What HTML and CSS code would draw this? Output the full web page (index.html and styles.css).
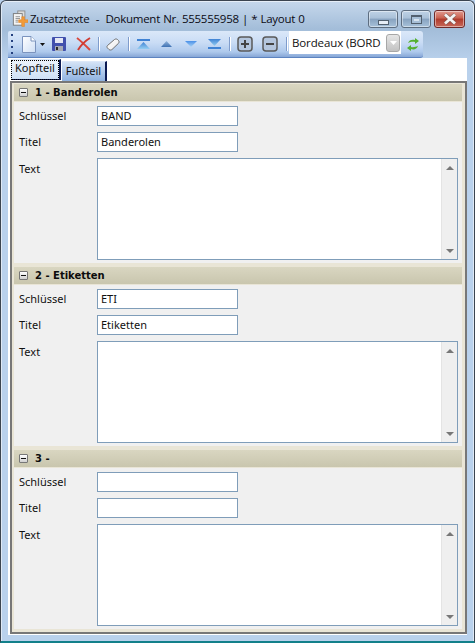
FILE: index.html
```html
<!DOCTYPE html>
<html lang="de">
<head>
<meta charset="utf-8">
<title>Zusatztexte</title>
<link rel="stylesheet" href="styles.css">
</head>
<body>
<div class="window">
  <header class="titlebar">
    <svg class="app-icon" width="16" height="17" viewBox="0 0 18 18">
      <rect x="6.500" y=".5" width="8" height="10" fill="#dcdcdc" stroke="#8a8a8a"/>
      <rect x="1.500" y="3.500" width="10" height="13" fill="#f4f4f4" stroke="#777"/>
      <path d="M4 7h5M4 9h5M4 11h3M4 13h3" stroke="#8b8b8b"/>
      <path d="M11 7h3v3.500h4v3h-4V18h-3v-4.500H7.500v-3H11z" fill="#f29b38" stroke="#e08428" stroke-width=".6"/>
    </svg>
    <span class="title-text">Zusatztexte  -  Dokument Nr. 555555958 | * Layout 0</span>
    <div class="caption-buttons">
      <div class="cap cap-min"><i class="min-glyph"></i></div>
      <div class="cap cap-max"><i class="max-glyph"></i></div>
      <div class="cap cap-close">
        <svg width="16" height="12" viewBox="0 0 16 12"><path d="M3 1.500 13 10.500M13 1.500 3 10.500" stroke="#5a5a5a" stroke-width="4.200" opacity=".55"/><path d="M3 1.500 13 10.500M13 1.500 3 10.500" stroke="#f4f4f4" stroke-width="2.800"/></svg>
      </div>
    </div>
  </header>

  <div class="client">
    <div class="toolbar">
      <svg class="grip" width="3" height="20" viewBox="0 0 3 20"><path d="M0 0h2v2H0zM0 6h2v2H0zM0 12h2v2H0zM0 18h2v2H0z" fill="#24407f"/></svg>
      <svg class="ic ic-new" width="14" height="17" viewBox="0 0 14 17">
        <defs><linearGradient id="paper" x1="0" y1="0" x2="1" y2="1"><stop offset="0" stop-color="#fff"/><stop offset="1" stop-color="#cfdff5"/></linearGradient></defs>
        <path d="M.5.500h8.500l4.500 4.500v11.500H.5z" fill="url(#paper)" stroke="#7b93bd"/><path d="M9 .5v4.500h4.500" fill="#fff" stroke="#7b93bd"/>
      </svg>
      <svg class="ic ic-drop" width="5" height="3" viewBox="0 0 5 3"><path d="M0 0h5L2.500 3z" fill="#111"/></svg>
      <svg class="ic ic-save" width="14" height="14" viewBox="0 0 14 14"><rect width="14" height="14" rx="1" fill="#4150ad"/><rect x="3" y="1" width="8" height="5" fill="#e4e7f4"/><rect x="3" y="9" width="8" height="5" fill="#a7abb5"/><rect x="4" y="10" width="2" height="3" fill="#2a2a2a"/></svg>
      <svg class="ic ic-del" width="15" height="14" viewBox="0 0 15 14"><path d="M1 1c4 3 8 7 13 12" stroke="#d9483c" stroke-width="2" fill="none"/><path d="M14 1C9 4 5 8 2 13" stroke="#d03c32" stroke-width="2" fill="none"/></svg>
      <i class="sep"></i>
      <svg class="ic ic-erase" width="14" height="13" viewBox="0 0 14 13">
        <defs><linearGradient id="pill" x1="0" y1="0" x2="1" y2="1"><stop offset="0" stop-color="#fff"/><stop offset=".7" stop-color="#f0f0f0"/><stop offset="1" stop-color="#a8a8a8"/></linearGradient></defs>
        <path d="M1.500 7.500 8.500 1.500c1-.7 2-.7 3 0l1 1c.8 1 .7 2 0 2.800L6 11.500c-1 .7-2 .7-3 0L1.500 10c-.7-.8-.7-1.700 0-2.500z" fill="url(#pill)" stroke="#6f6f6f"/>
      </svg>
      <i class="sep"></i>
      <svg class="ic ic-first" width="13" height="10" viewBox="0 0 13 10">
        <defs><linearGradient id="blue" x1="0" y1="0" x2="0" y2="1"><stop offset="0" stop-color="#3f82d4"/><stop offset="1" stop-color="#93cdf2"/></linearGradient>
        <linearGradient id="blueup" x1="0" y1="0" x2="0" y2="1"><stop offset="0" stop-color="#8fb2d8"/><stop offset="1" stop-color="#3f72b4"/></linearGradient>
        <linearGradient id="bluedn" x1="0" y1="0" x2="0" y2="1"><stop offset="0" stop-color="#4a90e8"/><stop offset="1" stop-color="#a8d2f4"/></linearGradient></defs>
        <path d="M0 0h13v2H0z" fill="#3f82d4"/><path d="M6.500 3 13 10H0z" fill="url(#blue)"/>
      </svg>
      <svg class="ic ic-up" width="11" height="6" viewBox="0 0 11 6"><path d="M5.500 0 11 6H0z" fill="url(#blueup)"/></svg>
      <svg class="ic ic-down" width="12" height="6" viewBox="0 0 12 6"><path d="M0 0h12L6 6z" fill="url(#bluedn)"/></svg>
      <svg class="ic ic-last" width="13" height="10" viewBox="0 0 13 10"><path d="M0 0h13L6.500 7z" fill="url(#blue)"/><path d="M0 8h13v2H0z" fill="#3f82d4"/></svg>
      <i class="sep"></i>
      <svg class="ic ic-plus" width="16" height="16" viewBox="0 0 16 16"><rect x="1" y="1" width="14" height="14" rx="3" fill="#b4c6de" stroke="#5a5a5a" stroke-width="1.500"/><path d="M4 8h8M8 4v8" stroke="#444" stroke-width="2"/></svg>
      <svg class="ic ic-minus" width="16" height="16" viewBox="0 0 16 16"><rect x="1" y="1" width="14" height="14" rx="3" fill="#b4c6de" stroke="#5a5a5a" stroke-width="1.500"/><path d="M4 8h8" stroke="#444" stroke-width="2"/></svg>
      <i class="sep"></i>
      <div class="combo">
        <span class="combo-text">Bordeaux (BORD</span>
        <div class="combo-btn"><svg width="7" height="4" viewBox="0 0 7 4"><path d="M0 0h7L3.500 4z" fill="#fff"/></svg></div>
      </div>
      <svg class="ic ic-refresh" width="12" height="15" viewBox="0 0 12 15"><path d="M1 6c1-3 4-4 7-3V1l4 3-4 3V5C6 4.500 3 5 1 6z" fill="#55b030"/><path d="M11 9c-1 3-4 4-7 3v2L0 11l4-3v2c2 .5 5 0 7-1z" fill="#55b030"/></svg>
    </div>

    <div class="tabstrip">
      <div class="tab tab-active"><span class="tab-label">Kopfteil</span></div>
      <div class="tab"><span class="tab-label">Fußteil</span></div>
    </div>

    <div class="panel">
      <section class="group">
        <h2 class="group-head"><span class="toggle"><i></i></span>1 - Banderolen</h2>
        <div class="fields">
          <label class="lbl">Schlüssel</label><input class="inp" value="BAND">
          <label class="lbl">Titel</label><input class="inp" value="Banderolen">
          <label class="lbl lbl-text">Text</label>
          <div class="memo"><div class="scroll"><i class="arrow-up"></i><i class="arrow-down"></i></div></div>
        </div>
      </section>
      <section class="group">
        <h2 class="group-head"><span class="toggle"><i></i></span>2 - Etiketten</h2>
        <div class="fields">
          <label class="lbl">Schlüssel</label><input class="inp" value="ETI">
          <label class="lbl">Titel</label><input class="inp" value="Etiketten">
          <label class="lbl lbl-text">Text</label>
          <div class="memo"><div class="scroll"><i class="arrow-up"></i><i class="arrow-down"></i></div></div>
        </div>
      </section>
      <section class="group">
        <h2 class="group-head"><span class="toggle"><i></i></span>3 -</h2>
        <div class="fields">
          <label class="lbl">Schlüssel</label><input class="inp" value="">
          <label class="lbl">Titel</label><input class="inp" value="">
          <label class="lbl lbl-text">Text</label>
          <div class="memo"><div class="scroll"><i class="arrow-up"></i><i class="arrow-down"></i></div></div>
        </div>
      </section>
    </div>
  </div>
</div>
</body>
</html>
```
FILE: styles.css
```css
* { box-sizing: border-box; }
html, body { margin: 0; padding: 0; }
body { width: 475px; height: 643px; overflow: hidden; background: #b9d1ec; font-family: "DejaVu Sans", sans-serif; }

.window {
  width: 475px; height: 643px;
  display: flex; flex-direction: column;
  border: 1px solid #3b4450;
  border-bottom: 2px solid #12808a;
  border-radius: 6px 6px 0 0;
  background: linear-gradient(180deg, #c6d8ec 0, #a3bdd9 28px, #b9d1ec 60px, #b9d1ec 100%);
  box-shadow: inset 0 1px 0 #e6eef7, inset 1px 0 0 #dfe9f5, inset -1px 0 0 #dfe9f5;
  padding: 0 7px 6px;
}

.titlebar { height: 30px; flex: none; display: flex; align-items: flex-start; }
.app-icon { margin: 9px 0 0 4px; flex: none; }
.title-text {
  margin: 9px 0 0 2px; font: 11.500px/17px "Open Sans", "Noto Sans", sans-serif;
  color: #0b0b14; white-space: pre; letter-spacing: -.25px; word-spacing: .4px;
}
.caption-buttons { margin: 9px 2px 0 auto; display: flex; gap: 3px; }
.cap {
  height: 18px; border: 1px solid #5d6d80; border-radius: 3px;
  display: flex; align-items: center; justify-content: center;
  box-shadow: inset 0 0 0 1px rgba(255,255,255,.45);
  background: linear-gradient(180deg, #bfd2e6 0, #a9c0d8 45%, #87a2bf 50%, #a7c1da 100%);
}
.cap-min, .cap-max { width: 30px; }
.cap-close { width: 31px; border-color: #6e2a2a; background: linear-gradient(180deg, #e29a90 0, #c9604f 45%, #b03a2c 50%, #c7685a 100%); }
.min-glyph { width: 11px; height: 5px; margin-top: 6px; background: #e6edf6; border: 1px solid #52606f; }
.max-glyph { width: 11px; height: 9px; background: #d8e4f0; border: 1px solid #52606f; border-top-width: 2px; box-shadow: inset 0 0 0 2px #a7bfd7; }

.client { flex: 1; min-height: 0; display: flex; flex-direction: column; background: linear-gradient(180deg, transparent 27px, #fff 27px); }

.toolbar {
  height: 27px; width: 415px; flex: none;
  display: flex; align-items: center;
  background: linear-gradient(180deg, #dbe8f9 0, #c9dcf5 45%, #aec9ec 80%, #86a6d6 100%);
  border-bottom: 1px solid #5c83c0;
  border-radius: 2px 3px 3px 0;
}
.grip { margin-left: 3px; flex: none; }
.ic { flex: none; display: block; }
.ic-new { margin-left: 8px; }
.ic-drop { margin-left: 4px; }
.ic-save { margin-left: 7px; }
.ic-del { margin-left: 10px; }
.ic-erase { margin-left: 7px; }
.ic-first { margin-left: 8px; }
.ic-up { margin-left: 11px; }
.ic-down { margin-left: 13px; }
.ic-last { margin-left: 11px; }
.ic-plus { margin-left: 7px; }
.ic-minus { margin-left: 9px; }
.ic-refresh { margin-left: 6px; }
.sep { width: 1px; height: 14px; background: #7f9ccc; box-shadow: 1px 0 0 #fff; flex: none; margin-left: 7px; }
.ic-erase + .sep, .ic-last + .sep, .ic-minus + .sep { margin-left: 8px; }
.combo { width: 112px; height: 23px; margin-left: 2px; margin-top: -3px; background: #fff; display: flex; align-items: center; flex: none; }
.combo-text { font: 11.500px/16px "Open Sans", "Noto Sans", sans-serif; color: #111; margin-left: 3px; flex: 1; white-space: nowrap; letter-spacing: -.12px; }
.combo-btn {
  width: 14px; height: 18px; margin-right: 1px; border: 1px solid #a7a7a7; border-radius: 3px; flex: none;
  background: linear-gradient(180deg, #e6e6e6, #c2c2c2);
  display: flex; align-items: center; justify-content: center;
}

.tabstrip { height: 23px; flex: none; display: flex; align-items: flex-start; padding: 1px 0 0 3px; background: #fff; gap: 1px; }
.tab {
  height: 20px; width: 45px; margin-top: 2px; padding-bottom: 2px; display: flex; align-items: center; justify-content: center;
  background: linear-gradient(180deg, #d4e3f6, #8fb2e0);
  border-right: 2px solid #0b1a52;
  border-top: 1px solid #dce8f8;
  font: 11px/16px "Noto Sans", sans-serif; color: #111;
}
.tab-active { width: 50px; height: 21px; margin-top: 0; padding-bottom: 0; background: linear-gradient(180deg, #edf3fb, #cfe0f5); border-bottom: 1px solid #0b1a52; }
.tab-active .tab-label { outline: 1px dotted #000; padding: 0 3px 2px; width: 46px; height: 18px; line-height: 14px; text-align: center; }

.panel {
  flex: 1; min-height: 0; overflow: hidden;
  background: #e9e5d6;
  border: 2px solid #777;
  margin: 0 0 1px 2px;
  padding: 1px 3px 0 2px;
}
.group { margin-bottom: 4px; }
.group-head {
  margin: 0; height: 18px; display: flex; align-items: center;
  font: bold 10px/17px "DejaVu Sans", sans-serif; color: #0c0c0c;
  background: linear-gradient(180deg, #d9d6c1, #c9c6ae) 0 0 / 100% 17px no-repeat, #e9e5d6;
  padding: 0 0 1px 5px;
}
.toggle { width: 9px; height: 9px; border: 1px solid #777; border-radius: 1px; background: linear-gradient(180deg,#fff,#d0d0d0); margin-right: 7px; display: flex; align-items: center; justify-content: center; flex: none; }
.toggle i { width: 5px; height: 1px; background: #111; }

.fields {
  display: grid; grid-template-columns: 83px 141px 1fr;
  grid-template-rows: 20px 20px 102px; row-gap: 6px;
  padding: 4px 4px 3px 0;
  background: #f0f0f0;
}
.lbl { grid-column: 1; font: 11px/20px "Noto Sans", sans-serif; color: #111; padding-left: 5px; }
.lbl-text { padding-top: 1px; }
.inp {
  grid-column: 2; width: 141px; height: 20px; border: 1px solid #7f9db9; background: #fff; padding: 0 3px 1px;
  font: 11px/17px "Noto Sans", sans-serif; color: #111; outline: 0;
}
.memo { grid-column: 2 / 4; border: 1px solid #7f9db9; background: #fff; display: flex; justify-content: flex-end; }
.scroll {
  width: 16px; height: 100%; background: #efefef; border-left: 1px solid #e4e4e4;
  display: flex; flex-direction: column; justify-content: space-between; align-items: center;
  padding: 7px 0 6px;
}
.arrow-up, .arrow-down { width: 0; height: 0; border-left: 4px solid transparent; border-right: 4px solid transparent; }
.arrow-up { border-bottom: 4px solid #777; }
.arrow-down { border-top: 4px solid #777; }
```
